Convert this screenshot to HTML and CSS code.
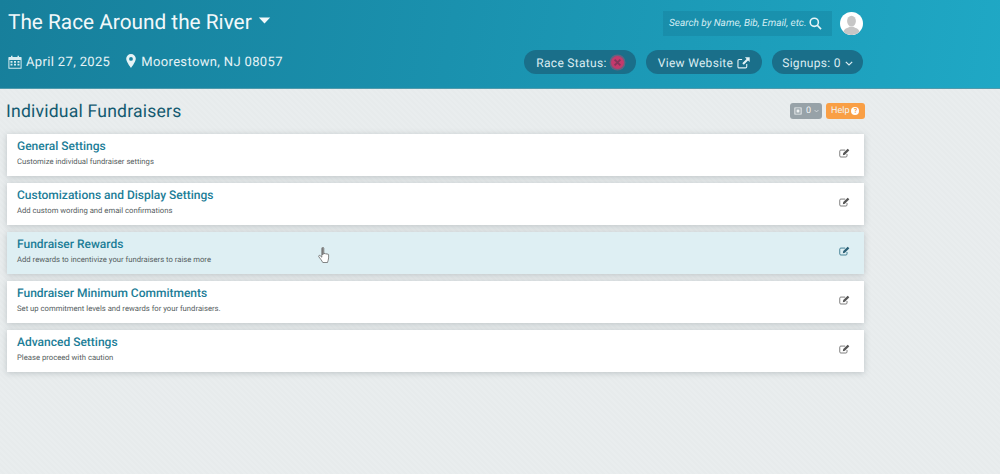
FILE: index.html
```html
<!DOCTYPE html>
<html lang="en">
<head>
<meta charset="utf-8">
<title>Individual Fundraisers</title>
<link rel="stylesheet" href="styles.css">
</head>
<body>
<header class="top">
  <div class="top-inner">
    <div class="row row-one">
      <h1 class="race">The Race Around the River <svg class="caret" viewBox="0 0 14 8"><path d="M0.5 0.5h13L7 7.5z"/></svg></h1>
      <div class="account">
        <div class="search"><span>Search by Name, Bib, Email, etc.</span>
          <svg class="search-icon" viewBox="0 0 14 14"><circle cx="5.7" cy="5.7" r="4.4"/><path d="M9 9l4 4"/></svg>
        </div>
        <div class="avatar"><svg viewBox="0 0 24 24"><circle cx="12" cy="12" r="12" fill="#fff"/><ellipse cx="12" cy="9.5" rx="4.6" ry="5.6" fill="#c6c6c6"/><path d="M3.5 20.5c1.5-3.5 5-3.8 6.5-5h4c1.500 1.200 5 1.500 6.500 5a12 12 0 0 1-17 0z" fill="#c6c6c6"/></svg></div>
      </div>
    </div>
    <div class="row row-two">
      <div class="meta">
        <span class="meta-item"><svg class="cal" viewBox="0 0 14 14"><path fill-rule="evenodd" d="M1 2h2V.8h1.500V2h5V.8H11V2h2a.6.6 0 0 1 .6.600v10.600a.6.6 0 0 1-.6.600H1a.6.6 0 0 1-.6-.600V2.600A.6.6 0 0 1 1 2zm.4 3v7.800h11.200V5zM2.500 6h2v1.700h-2zm3.500 0h2v1.700H6zm3.500 0h2v1.700h-2zm-7 2.700h2v1.700h-2zm3.500 0h2v1.700H6zm3.500 0h2v1.700h-2z"/></svg>April 27, 2025</span>
        <span class="meta-item"><svg class="pin" viewBox="0 0 10 14"><path fill-rule="evenodd" d="M5 0a4.800 4.800 0 0 1 4.800 4.800C9.800 7.500 6.500 12 5 14 3.500 12 .2 7.500.2 4.800A4.800 4.800 0 0 1 5 0zm0 3a1.900 1.900 0 1 0 0 3.800A1.900 1.900 0 0 0 5 3z"/></svg>Moorestown, NJ 08057</span>
      </div>
      <div class="pills">
        <span class="pill pill-status">Race Status: <span class="status-dot"><svg viewBox="0 0 10 10"><path d="M2.800 2.800l4.400 4.400M7.200 2.800L2.800 7.200"/></svg></span></span>
        <span class="pill pill-site">View Website <svg class="ext" viewBox="0 0 14 13"><path class="ext-box" d="M10.500 7.500v3a1.300 1.300 0 0 1-1.300 1.300H2.300A1.300 1.300 0 0 1 1 10.500V4a1.300 1.300 0 0 1 1.300-1.300h3.200"/><path class="ext-arrow" d="M8.500.3H13.700V5.500L11.900 3.700 7.300 8.300 5.700 6.700 10.300 2.100z"/></svg></span>
        <span class="pill pill-signups">Signups: 0 <svg class="chev" viewBox="0 0 8 5"><path d="M.8.800L4 4l3.200-3.200"/></svg></span>
      </div>
    </div>
  </div>
</header>
<main class="content">
  <div class="title-row">
    <h2 class="page-title">Individual Fundraisers</h2>
    <div class="tools">
      <span class="tool tool-count"><svg class="grid" viewBox="0 0 10 10"><path fill-rule="evenodd" d="M.5.500h9v9h-9zM1.700 1.700v6.600h6.600V1.700zM3.200 3.200h3.600v3.600H3.200z"/></svg>0 <svg class="chev-sm" viewBox="0 0 8 5"><path d="M.8.800L4 4l3.200-3.200"/></svg></span>
      <span class="tool tool-help">Help <span class="q">?</span></span>
    </div>
  </div>
  <section class="card">
    <div><h3>General Settings</h3><p>Customize individual fundraiser settings</p></div>
    <svg class="edit" viewBox="0 0 13 12"><path class="e-box" d="M9.500 7.200v2.300a1.300 1.300 0 0 1-1.300 1.300H2.100A1.300 1.300 0 0 1 .8 9.500V3.800a1.300 1.300 0 0 1 1.300-1.300h5.200"/><path class="e-pen" d="M10.300.8l2 2-5.300 5.300-2.500.5.500-2.500z"/></svg>
  </section>
  <section class="card">
    <div><h3>Customizations and Display Settings</h3><p>Add custom wording and email confirmations</p></div>
    <svg class="edit" viewBox="0 0 13 12"><path class="e-box" d="M9.500 7.200v2.300a1.300 1.300 0 0 1-1.300 1.300H2.100A1.300 1.300 0 0 1 .8 9.500V3.800a1.300 1.300 0 0 1 1.300-1.300h5.200"/><path class="e-pen" d="M10.300.8l2 2-5.300 5.300-2.500.5.500-2.500z"/></svg>
  </section>
  <section class="card card-active">
    <div><h3>Fundraiser Rewards</h3><p>Add rewards to incentivize your fundraisers to raise more</p></div>
    <svg class="edit" viewBox="0 0 13 12"><path class="e-box" d="M9.500 7.200v2.300a1.300 1.300 0 0 1-1.300 1.300H2.100A1.300 1.300 0 0 1 .8 9.500V3.800a1.300 1.300 0 0 1 1.300-1.300h5.200"/><path class="e-pen" d="M10.300.8l2 2-5.300 5.300-2.500.5.500-2.500z"/></svg>
    <svg class="cursor" viewBox="0 0 12 16.500"><path d="M3.800 1.200c0-1.200 2-1.200 2 0V7c.3-.8 1.500-.8 1.600.1.300-.7 1.400-.6 1.500.3.400-.6 1.700-.4 1.700.5v3c0 1.800-.7 2.800-1.100 4.600H4.800C4 14 2.700 12 1 10c-.9-1 .2-2.200 1.200-1.300l1.600 1.500z"/><path class="c-line" d="M4.800 1v7"/></svg>
  </section>
  <section class="card">
    <div><h3>Fundraiser Minimum Commitments</h3><p>Set up commitment levels and rewards for your fundraisers.</p></div>
    <svg class="edit" viewBox="0 0 13 12"><path class="e-box" d="M9.500 7.200v2.300a1.300 1.300 0 0 1-1.300 1.300H2.100A1.300 1.300 0 0 1 .8 9.500V3.800a1.300 1.300 0 0 1 1.300-1.300h5.200"/><path class="e-pen" d="M10.300.8l2 2-5.300 5.300-2.500.5.500-2.500z"/></svg>
  </section>
  <section class="card">
    <div><h3>Advanced Settings</h3><p>Please proceed with caution</p></div>
    <svg class="edit" viewBox="0 0 13 12"><path class="e-box" d="M9.500 7.200v2.300a1.300 1.300 0 0 1-1.300 1.300H2.100A1.300 1.300 0 0 1 .8 9.500V3.800a1.300 1.300 0 0 1 1.300-1.300h5.200"/><path class="e-pen" d="M10.300.8l2 2-5.300 5.300-2.500.5.500-2.500z"/></svg>
  </section>
</main>
</body>
</html>
```
FILE: styles.css
```css
* { box-sizing: border-box; }
html, body { margin: 0; height: 100%; }
body {
  background: repeating-linear-gradient(45deg, #e9edee 0 2px, #e7ebec 2px 4px);
  font-family: Roboto, "Liberation Sans", sans-serif;
  text-rendering: geometricPrecision;
  overflow: hidden;
}
.top {
  height: 89px;
  background: linear-gradient(100deg, #177f9b 0%, #1a91ae 45%, #1fa8c5 100%);
  border-bottom: 1px solid #4f9aac;
  color: #e6f3f6;
}
.top-inner {
  width: 855px;
  margin-left: 8px;
  padding-top: 9px;
}
.row { display: flex; align-items: center; justify-content: space-between; }
.row-one { height: 28px; }
.row-two { height: 26px; margin-top: 12px; }
.race {
  margin: 0;
  font-size: 20.800px;
  font-weight: 400;
  line-height: 28px;
  color: #f1f8fa;
  display: flex;
  align-items: center;
  gap: 5px;
  white-space: nowrap;
}
.caret { width: 13px; height: 7px; fill: #f1f8fa; margin-top: -5px; margin-left: 1px; }
.account { display: flex; align-items: center; gap: 8px; }
.search {
  width: 169px;
  height: 25px;
  margin-top: 1px;
  background: rgba(20, 120, 150, 0.35);
  display: flex;
  align-items: center;
  justify-content: space-between;
  padding: 0 10px 0 6px;
  font-size: 10px;
  font-style: italic;
  color: #d3edf3;
  white-space: nowrap;
}
.search-icon { width: 13px; height: 13px; flex: none; fill: none; stroke: #e8f5f8; stroke-width: 1.700; }
.avatar { width: 23px; height: 23px; }
.avatar svg { display: block; width: 23px; height: 23px; }
.meta { display: flex; gap: 16px; font-size: 13px; letter-spacing: 0.35px; }
.meta-item { display: flex; align-items: center; gap: 4px; }
.cal { width: 14px; height: 14px; fill: #d8ebf0; }
.pin { width: 10px; height: 14px; fill: #e6f3f6; margin-right: 1px; margin-top: -3px; }
.pills { display: flex; gap: 10px; }
.pill {
  height: 24px;
  padding-top: 1px;
  border-radius: 12px;
  background: #1a6f8a;
  display: flex;
  align-items: center;
  justify-content: center;
  gap: 4px;
  font-size: 12px;
  letter-spacing: 0.3px;
  color: #dcedf2;
}
.pill-status { width: 112px; }
.pill-site { width: 116px; }
.pill-signups { width: 91px; }
.status-dot {
  width: 13px;
  height: 13px;
  border-radius: 50%;
  background: #c43a6c;
  box-shadow: 0 0 0 1.500px rgba(150, 90, 120, 0.6);
  display: flex;
}
.status-dot svg { width: 13px; height: 13px; fill: none; stroke: #85355a; stroke-width: 1.400; }
.ext { width: 13px; height: 12px; }
.ext-box { fill: none; stroke: #e3f1f5; stroke-width: 1.200; }
.ext-arrow { fill: #e3f1f5; }
.chev { width: 8px; height: 5px; fill: none; stroke: #dcedf2; stroke-width: 1.200; margin-top: 2px; }
.content { width: 857px; margin-left: 7px; }
.title-row {
  height: 45px;
  display: flex;
  align-items: center;
  justify-content: space-between;
}
.page-title {
  margin: 0 0 0 -1px;
  font-size: 17.600px;
  font-weight: 400;
  letter-spacing: 0.2px;
  color: #145a70;
}
.tools { display: flex; gap: 4px; margin-top: -1px; margin-right: -1px; }
.tool {
  height: 16px;
  border-radius: 3px;
  display: flex;
  align-items: center;
  font-size: 9px;
  color: #f2f4f5;
}
.tool-count { width: 32px; background: #97a2a8; padding-left: 4px; gap: 3px; }
.grid { width: 8px; height: 8px; fill: #eef1f2; margin-right: 1px; }
.chev-sm { width: 5px; height: 4px; fill: none; stroke: #eef1f2; stroke-width: 1; }
.tool-help { width: 39px; background: #f99f45; padding-left: 5px; gap: 2px; }
.q {
  width: 8px;
  height: 8px;
  border-radius: 50%;
  background: #fff;
  color: #f99f45;
  font-size: 7px;
  font-weight: 700;
  line-height: 8px;
  text-align: center;
}
.card {
  position: relative;
  height: 42px;
  margin-bottom: 7px;
  padding: 5px 14px 0 10px;
  background: #fff;
  box-shadow: 0 1px 6px rgba(110, 120, 125, 0.35);
  display: flex;
  justify-content: space-between;
  align-items: flex-start;
}
.card-active { background: #deeff3; }
.card h3 {
  margin: 0;
  font-size: 12px;
  line-height: 15px;
  font-weight: 500;
  color: #1c7d97;
}
.card p {
  margin: 2px 0 0;
  font-size: 7.700px;
  line-height: 11px;
  color: #555d60;
}
.edit { width: 11px; height: 10px; margin-top: 9px; flex: none; }
.e-box { fill: none; stroke: #666; stroke-width: 1; }
.e-pen { fill: #555; }
.card-active .e-box { stroke: #2a6f85; }
.card-active .e-pen { fill: #2a5f75; }
.cursor {
  position: absolute;
  left: 311px;
  top: 15px;
  width: 12px;
  height: 16.500px;
  fill: #fff;
  stroke: #555;
  stroke-width: 0.700;
}
.c-line { stroke: #444; stroke-width: 0.900; }
```
